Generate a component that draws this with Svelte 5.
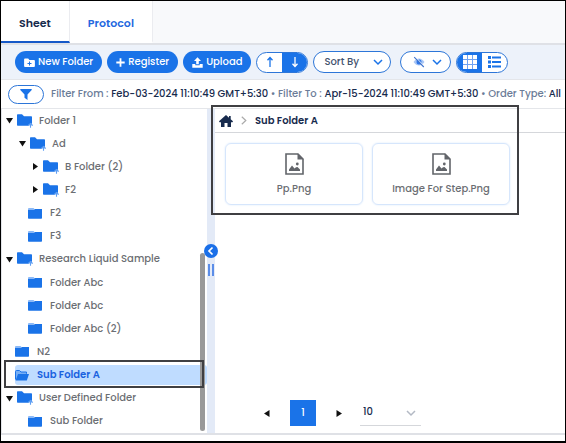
<script>
  const tree = [
    { name: 'Folder 1', level: 0, kind: 'open' },
    { name: 'Ad', level: 1, kind: 'open' },
    { name: 'B Folder (2)', level: 2, kind: 'closed' },
    { name: 'F2', level: 2, kind: 'closed' },
    { name: 'F2', level: 1, kind: 'leaf' },
    { name: 'F3', level: 1, kind: 'leaf' },
    { name: 'Research Liquid Sample', level: 0, kind: 'open' },
    { name: 'Folder Abc', level: 1, kind: 'leaf' },
    { name: 'Folder Abc', level: 1, kind: 'leaf' },
    { name: 'Folder Abc (2)', level: 1, kind: 'leaf' },
    { name: 'N2', level: 0, kind: 'leaf' },
    { name: 'Sub Folder A', level: 0, kind: 'leaf' },
    { name: 'User Defined Folder', level: 0, kind: 'open' },
    { name: 'Sub Folder', level: 1, kind: 'leaf' }
  ];
  const files = ['Pp.Png', 'Image For Step.Png'];
  let selected = $state(11);
  let sort = $state('Sort By');
  let pageSize = $state('10');
</script>

{#snippet chevron()}
  <svg class="chev" width="10" height="7" viewBox="0 0 10 7" aria-hidden="true"><path d="M1 1l4 4 4-4" fill="none" stroke="currentColor" stroke-width="1.5" /></svg>
{/snippet}

<div class="app">
  <nav class="tabs">
    <a class="tab active" href="#sheet">Sheet</a>
    <a class="tab" href="#protocol">Protocol</a>
  </nav>

  <div class="toolbar">
    <button class="pill">
      <svg width="11" height="9" viewBox="0 0 11 9" aria-hidden="true"><path d="M1 .5h3.200L5.400 2H10a.9.9 0 0 1 .9.9V8a.9.9 0 0 1-.9.9H1A.9.9 0 0 1 .1 8V1.400A.9.9 0 0 1 1 .5z" fill="#fff" /><path d="M5.500 3.500v4M3.500 5.500h4" stroke="#1a73e8" stroke-width="1" /></svg>
      New Folder
    </button>
    <button class="pill">
      <svg width="9" height="9" viewBox="0 0 9 9" aria-hidden="true"><path d="M4.500 .3v8.400M.3 4.500h8.400" stroke="#fff" stroke-width="1.800" /></svg>
      Register
    </button>
    <button class="pill">
      <svg width="11" height="11" viewBox="0 0 11 11" aria-hidden="true"><path d="M5.500 .3L9 4H6.800v3.300H4.200V4H2zM.3 7h3v1.300h4.400V7h3v3.700H.3z" fill="#fff" /></svg>
      Upload
    </button>
    <div class="toggle">
      <button aria-label="Ascending"><svg width="8" height="12" viewBox="0 0 8 12" aria-hidden="true"><path d="M4 11V1.500M1.500 4.300L4 1.500l2.500 2.800" fill="none" stroke="currentColor" stroke-width="1.300" /></svg></button>
      <button class="on" aria-label="Descending"><svg width="8" height="12" viewBox="0 0 8 12" aria-hidden="true"><path d="M4 1v9.500M1.500 7.700L4 10.500l2.500-2.800" fill="none" stroke="currentColor" stroke-width="1.300" /></svg></button>
    </div>
    <div class="sort">
      <select aria-label="Sort by" bind:value={sort}>
        <option>Sort By</option>
        <option>Name</option>
      </select>
      {@render chevron()}
    </div>
    <button class="eye" aria-label="Visibility">
      <svg width="12" height="12" viewBox="0 0 12 12" aria-hidden="true"><path d="M.5 6Q3 2.500 6 2.500T11.500 6Q9 9.500 6 9.500T.5 6z" fill="#a9c6f5" /><circle cx="6" cy="6" r="2.500" fill="#2d76ea" /><path d="M2.500 1l9 9.500" stroke="#fff" stroke-width="1" /><path d="M1.200 1.200l9.600 9.800" stroke="#3f74cf" stroke-width="1.100" /></svg>
      {@render chevron()}
    </button>
    <div class="toggle">
      <button class="on" aria-label="Grid view"><svg width="14" height="14" viewBox="0 0 14 14" aria-hidden="true"><path d="M0 0h14v14H0z" fill="#fff" /><path d="M4.500 0v14M9.500 0v14M0 4.500h14M0 9.500h14" stroke="#6fa3f3" stroke-width="1" /></svg></button>
      <button aria-label="List view"><svg width="13" height="12" viewBox="0 0 13 12" aria-hidden="true"><path d="M0 0h3v3H0zM4 .5h9v2H4zM0 4.500h3v3H0zM4 5h9v2H4zM0 9h3v3H0zM4 9.500h9v2H4z" fill="#1a73e8" /></svg></button>
    </div>
  </div>

  <div class="filters">
    <button class="filter" aria-label="Filter"><svg width="12" height="11" viewBox="0 0 12 11" aria-hidden="true"><path d="M.8 0h10.400q1 .1.500.9L7.500 5.500V11L4.500 8.800V5.500L.3.900Q-.1.100.8 0z" fill="#1a73e8" /></svg></button>
    <p><span>Filter From :</span> <b>Feb-03-2024 11:10:49 GMT+5:30</b> <span>•</span> <span>Filter To :</span> <b>Apr-15-2024 11:10:49 GMT+5:30</b> <span>•</span> <span>Order Type:</span> <b>All</b></p>
  </div>

  <div class="body">
    <aside>
      <ul>
        {#each tree as node, i}
          <li style:--level={node.level}>
            <button class="node {node.kind}" class:selected={i === selected} onclick={() => (selected = i)}>
              {#if node.kind === 'leaf'}
                {#if i === selected}
                  <svg width="14" height="11" viewBox="0 0 14 11" aria-hidden="true"><path d="M.5 9.500v-8q0-1 1-1h3L6 2h5.500v1.800" fill="#76aef5" stroke="#1a73e8" /><path d="M3 4h11l-2.200 6.500H.6z" fill="#1a73e8" /></svg>
                {:else}
                  <svg width="14" height="11" viewBox="0 0 14 11" aria-hidden="true"><path d="M.5 0h5L7 1.500V4H0V.5z" fill="#8bb9f7" /><path d="M0 2h6l1-.9h7V10q0 .7-.7.700H.7Q0 10.700 0 10z" fill="#1a73e8" /></svg>
                {/if}
              {:else}
                <svg class="arrow" width="7" height="7" viewBox="0 0 7 7" aria-hidden="true"><path d={node.kind === 'open' ? 'M0 1h7L3.500 6.500z' : 'M1 0v7l5-3.500z'} fill="#111" /></svg>
                <svg width="16" height="14" viewBox="0 0 16 14" aria-hidden="true"><path d="M0 1Q0 .3.700.300H5L7 2.300h7.300q.7 0 .7.700v8.700H.7q-.7 0-.7-.7z" fill="#1a73e8" /><path d="M11.300 11.700l2.500-2.700 2.200 2.700z" fill="#fff" /><path d="M13.500 13.700V9.500M11.300 11.500l2.200-2 2.200 2" fill="none" stroke="#5f9ff3" stroke-width="1.100" /></svg>
              {/if}
              {node.name}
            </button>
          </li>
        {/each}
      </ul>
      <div class="thumb"></div>
      <div class="frame frame-row"></div>
    </aside>

    <div class="splitter">
      <button aria-label="Collapse sidebar"><svg width="8" height="10" viewBox="0 0 8 10" aria-hidden="true"><path d="M5.500 1.500L2 5l3.500 3.500" fill="none" stroke="#fff" stroke-width="1.700" /></svg></button>
      <i></i>
    </div>

    <main>
      <div class="crumbs">
        <a href="#home" aria-label="Home"><svg width="14" height="12" viewBox="0 0 14 12" aria-hidden="true"><path d="M7 0l3 2.700V1h1.700v3.200L14 6.300l-.5 1H12V12H8.500V8h-3v4H2V7.300H.5L0 6.300z" fill="#172b4d" /></svg></a>
        <svg width="6" height="9" viewBox="0 0 6 9" aria-hidden="true"><path d="M.8.800l4 3.700-4 3.700" fill="none" stroke="#aaa" stroke-width="1.200" /></svg>
        <span>Sub Folder A</span>
      </div>
      <div class="cards">
        {#each files as file}
          <button class="card">
            <svg width="19" height="22" viewBox="0 0 19 22" aria-hidden="true"><path d="M1 1h12l5 5v15H1z" fill="#fff" stroke="#62656a" stroke-width="1.600" /><path d="M12.500 .5v6H18.500z" fill="#62656a" /><path d="M4 18v-1.500l3-4 2.500 3 1.500-1.300 1.500-.2 2.500 2.500V18z" fill="#62656a" /><circle cx="12.300" cy="11" r="1.400" fill="#62656a" /></svg>
            {file}
          </button>
        {/each}
      </div>
      <div class="pager">
        <button class="step" aria-label="Previous page"><svg width="6" height="7" viewBox="0 0 6 7" aria-hidden="true"><path d="M5.500 0v7L0 3.500z" fill="#111" /></svg></button>
        <button class="page">1</button>
        <button class="step" aria-label="Next page"><svg width="6" height="7" viewBox="0 0 6 7" aria-hidden="true"><path d="M.5 0v7L6 3.500z" fill="#111" /></svg></button>
        <div class="size">
          <select aria-label="Rows per page" bind:value={pageSize}>
            <option>10</option>
            <option>20</option>
          </select>
          {@render chevron()}
        </div>
      </div>
      <div class="frame frame-main"></div>
    </main>
  </div>
  <footer></footer>
</div>

<style>
  :global(body) { margin: 0; }
  .app, .app * { box-sizing: border-box; }
  .app {
    display: flex;
    flex-direction: column;
    min-height: 100vh;
    border: solid #000;
    border-width: 1px 1px 2px;
    background: #fff;
    color: #172b4d;
    font: 500 10px/16px Poppins, Inter, sans-serif;
  }
  button, select { font: inherit; color: inherit; border: 0; padding: 0; background: none; cursor: pointer; }
  svg { display: block; flex: none; }
  .tabs { display: flex; height: 42px; background: #f8f9fb; }
  .tab {
    display: flex;
    align-items: center;
    padding: 3px 18px 0;
    background: #fff;
    border-right: 1px solid #ebecf0;
    border-bottom: 2px solid transparent;
    color: #2568e0;
    font-size: 11px;
    font-weight: 600;
    text-decoration: none;
  }
  .tab.active { color: #172b4d; border-bottom-color: #1558c8; }
  .toolbar {
    display: flex;
    align-items: center;
    gap: 5px;
    height: 37px;
    padding: 0 14px;
    background: #edf2fa;
    border-top: 2px solid #dfe1e6;
    border-bottom: 1px solid #e4e6ea;
  }
  .pill {
    display: flex;
    align-items: center;
    gap: 3px;
    height: 22px;
    padding: 0 9px;
    border-radius: 11px;
    background: #1a73e8;
    color: #fff;
    white-space: nowrap;
  }
  .toggle { display: flex; height: 21px; width: 52px; border: 1px solid #2d76d8; border-radius: 11px; overflow: hidden; background: #fff; color: #1a73e8; }
  .toggle button { flex: 1; display: flex; align-items: center; justify-content: center; }
  .toggle .on { background: #1a73e8; color: #fff; }
  .sort { position: relative; width: 78px; height: 22px; margin-right: 4px; }
  .sort select { appearance: none; width: 100%; height: 100%; padding: 0 10px; border: 1px solid #2d76d8; border-radius: 11px; background: #fff; color: #42526e; }
  .sort .chev, .size .chev { position: absolute; right: 8px; top: 8px; color: #1a73e8; pointer-events: none; }
  .eye { display: flex; align-items: center; justify-content: space-between; width: 51px; height: 22px; padding: 0 8px 0 12px; border: 1px solid #2d76d8; border-radius: 11px; background: #fff; color: #1a73e8; }
  .filters { display: flex; align-items: center; gap: 7px; height: 29px; padding: 0 7px; border-bottom: 1px solid #e4e6ea; }
  .filter { display: flex; align-items: center; justify-content: center; flex: none; width: 36px; height: 19px; border: 1px solid #2d76d8; border-radius: 10px; }
  .filters p { margin: 0; white-space: nowrap; color: #172b4d; }
  .filters span { color: #6b7c98; }
  .filters b { font-weight: 500; }
  .body { display: flex; flex: 1; }
  aside { position: relative; display: flex; width: 206px; border-left: 1px solid #e4e6ea; }
  ul { display: flex; flex: 1; flex-direction: column; margin: 0; padding: 0; list-style: none; }
  li { flex: 1; display: flex; align-items: center; min-height: 23px; padding-left: calc(var(--level) * 13px); }
  .node { display: flex; flex: 1; align-items: center; gap: 6px; height: 20px; margin-left: 4px; color: #6b6e73; text-align: left; white-space: nowrap; }
  .node.leaf { gap: 8px; margin-left: 13px; border-radius: 3px; }
  .arrow { margin-right: -2px; }
  .node.selected { background: #bfdcff; color: #1a62e0; font-weight: 600; }
  .thumb { position: absolute; right: 2px; top: 144px; bottom: 2px; width: 5px; border-radius: 3px; background: #999; }
  .frame { position: absolute; border: 2px solid #3f3f42; pointer-events: none; }
  .frame-row { left: 2px; right: 3px; bottom: 45px; height: 28px; }
  .splitter { display: flex; flex-direction: column; align-items: center; gap: 6px; width: 8px; padding-top: 135px; background: #e3eaf7; }
  .splitter button { position: relative; display: flex; flex: none; align-items: center; justify-content: center; width: 14px; height: 14px; border-radius: 50%; background: #1a6fe8; }
  .splitter i { width: 6px; height: 12px; border: solid #5b8de8; border-width: 0 2px; }
  main { position: relative; display: flex; flex: 1; flex-direction: column; }
  .frame-main { left: -4px; right: 46px; top: -4px; height: 110px; }
  .crumbs { display: flex; align-items: center; gap: 8px; height: 24px; padding-left: 4px; border-bottom: 1px solid #d5d7db; font-weight: 600; }
  .cards { display: flex; gap: 9px; padding: 10px; }
  .card { display: flex; flex-direction: column; align-items: center; gap: 6px; width: 138px; height: 62px; padding-top: 9px; border: 1px solid #d6e6fc; border-radius: 6px; box-shadow: 0 0 2px #d6e6fc; color: #6b6e73; }
  .pager { display: flex; align-items: center; margin-top: auto; padding: 0 49px 7px; }
  .step { display: flex; }
  .page { width: 26px; height: 26px; margin: 0 20px; background: #1a73e8; color: #fff; }
  .size { position: relative; width: 61px; height: 26px; margin-left: 18px; border-bottom: 1px solid #d5d7db; }
  .size select { appearance: none; width: 100%; height: 24px; padding: 0 3px; }
  .size .chev { right: 5px; top: 10px; color: #b3b9c4; }
  footer { height: 8px; border-top: 2px solid #dfe1e6; }
</style>
